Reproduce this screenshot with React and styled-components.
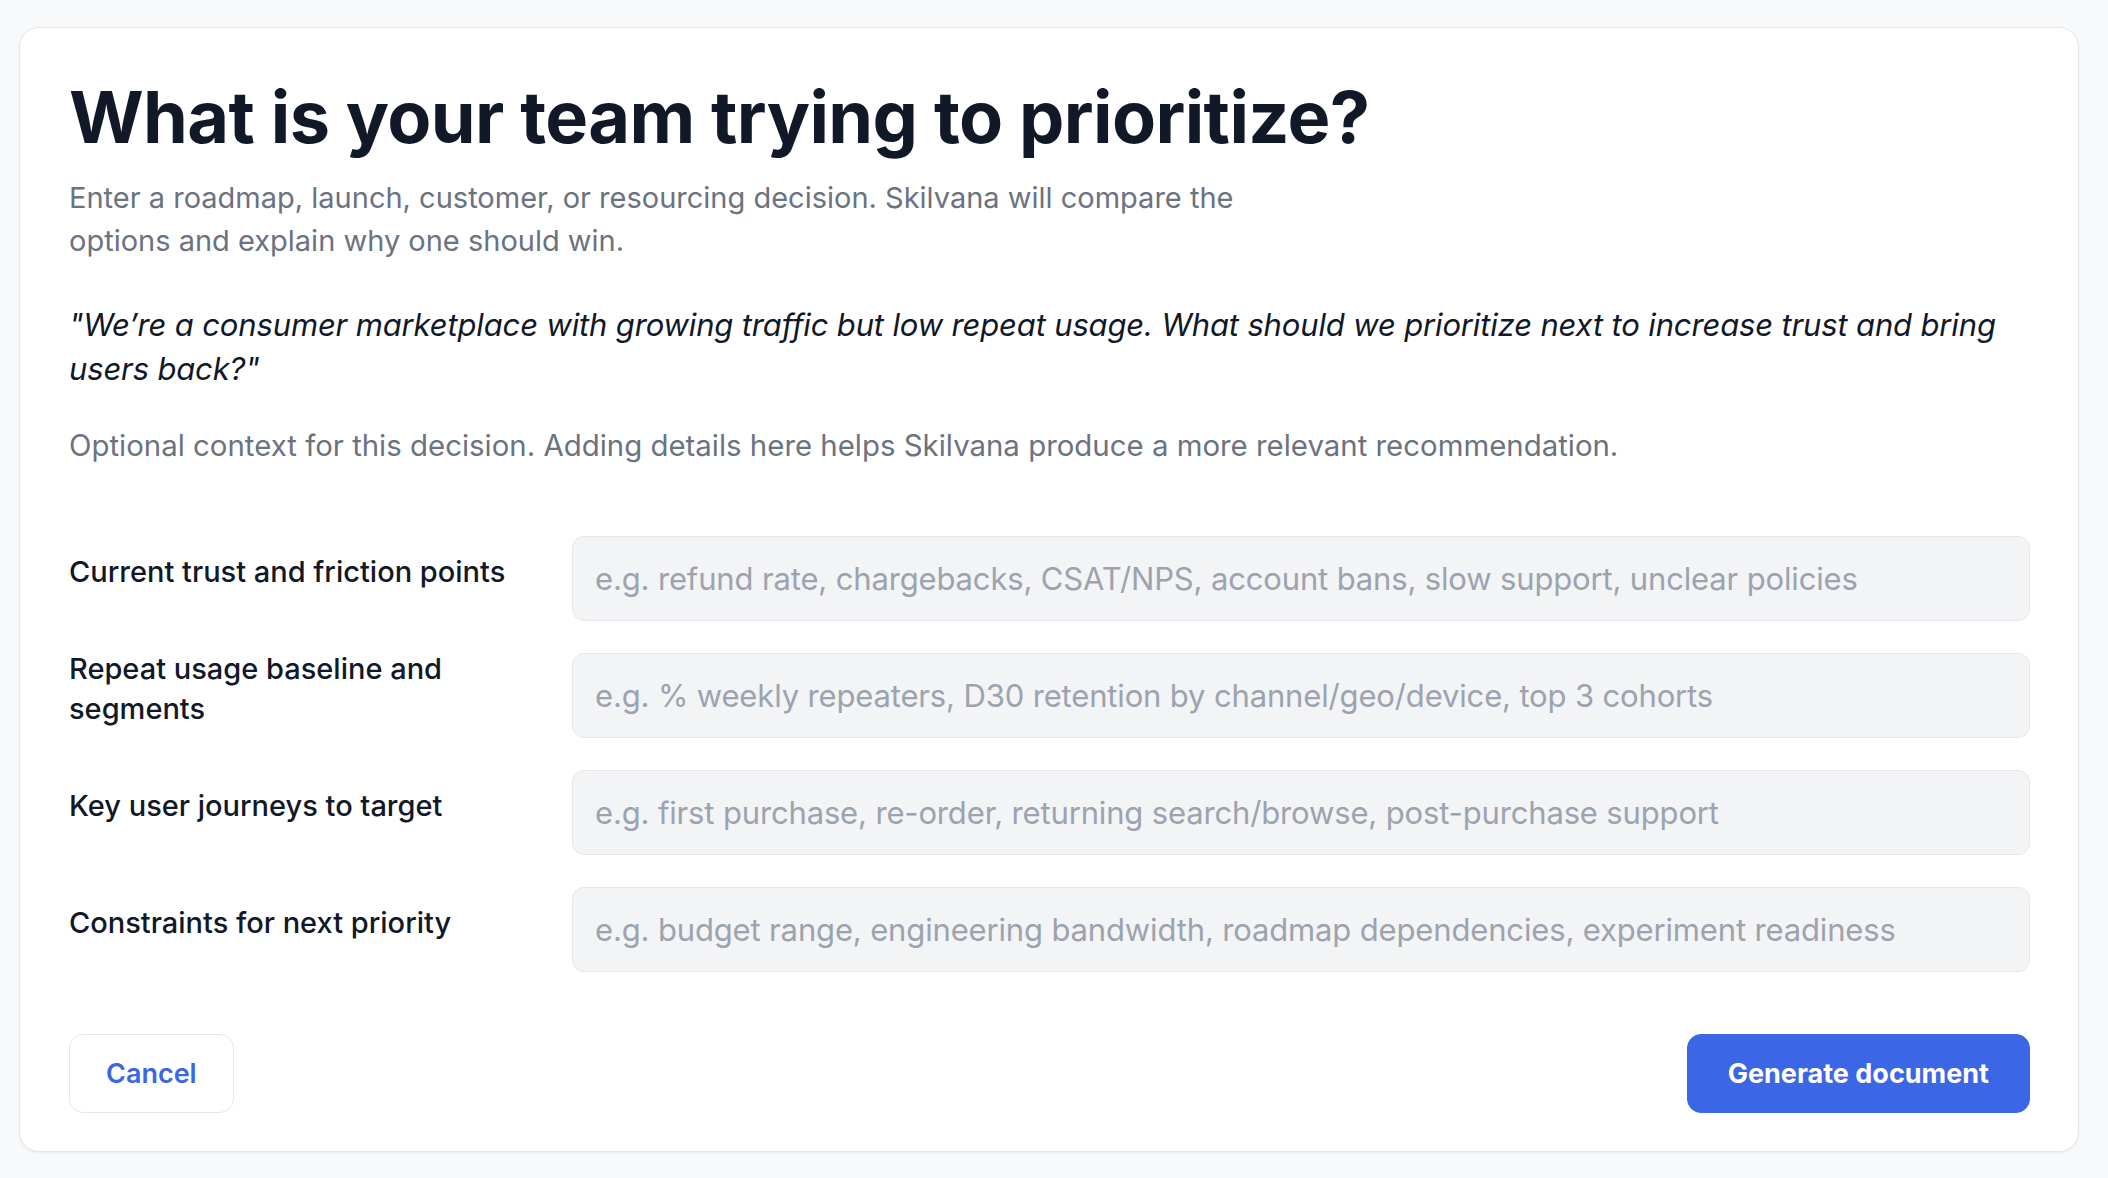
import React from "react";
import styled, { createGlobalStyle } from "styled-components";

const GlobalStyle = createGlobalStyle`
	* {
		box-sizing: border-box;
	}
	body {
		margin: 0;
		background: #f8f9fb;
		font-family: Inter, "Noto Sans", sans-serif;
		color: #111827;
	}
`;

const Page = styled.div`
	padding: 27px 29px 26px 19px;
`;

const Card = styled.section`
	background: #ffffff;
	border: 1px solid #e5e7eb;
	border-radius: 20px;
	box-shadow: 0 1px 3px rgba(17, 24, 39, 0.06);
	padding: 48px 48px 38px 49px;
`;

const Title = styled.h1`
	margin: 0 0 19px;
	font-size: 72px;
	line-height: 81px;
	font-weight: 700;
	letter-spacing: -0.6px;
	color: #111827;
`;

const Lead = styled.p`
	margin: 0;
	max-width: 1220px;
	font-size: ${p => p.$size || "29px"};
	line-height: 43px;
	color: #6b7280;
`;

const Quote = styled.p`
	margin: 41px 0 0;
	font-size: 31px;
	line-height: 44px;
	font-style: italic;
	color: #111827;
	letter-spacing: -0.15px;
`;

const Hint = styled(Lead)`
	max-width: none;
	margin-top: 33px;
`;

const Fields = styled.div`
	display: flex;
	flex-direction: column;
	gap: 32px;
	margin-top: 69px;
`;

const Row = styled.label`
	display: grid;
	grid-template-columns: 471px 1fr;
	column-gap: 32px;
	align-items: center;
`;

const FieldName = styled.span`
	margin: -7px 0 7px;
	font-size: 29px;
	line-height: 40px;
	font-weight: 500;
	color: #111827;
`;

const Input = styled.input`
	height: 85px;
	width: 100%;
	padding: 0 22px;
	border: 1px solid #e5e7eb;
	border-radius: 12px;
	background: #f3f4f6;
	font-family: inherit;
	font-size: 31px;
	color: #111827;
	letter-spacing: -0.15px;
	outline: none;

	&::placeholder {
		color: #9ca3af;
	}
`;

const Actions = styled.div`
	display: flex;
	justify-content: space-between;
	margin-top: 62px;
`;

const Button = styled.button`
	height: 79px;
	padding: 0 ${p => (p.$primary ? "40px" : "36px")};
	border-radius: 14px;
	border: 1px solid ${p => (p.$primary ? "#3b66e5" : "#e5e7eb")};
	background: ${p => (p.$primary ? "#3b66e5" : "#ffffff")};
	color: ${p => (p.$primary ? "#ffffff" : "#3b66e5")};
	font-family: inherit;
	font-size: 27px;
	font-weight: ${p => (p.$primary ? 700 : 600)};
	cursor: pointer;
`;

const fields = [
	{
		label: "Current trust and friction points",
		placeholder:
			"e.g. refund rate, chargebacks, CSAT/NPS, account bans, slow support, unclear policies",
	},
	{
		label: "Repeat usage baseline and segments",
		placeholder:
			"e.g. % weekly repeaters, D30 retention by channel/geo/device, top 3 cohorts",
	},
	{
		label: "Key user journeys to target",
		placeholder:
			"e.g. first purchase, re-order, returning search/browse, post-purchase support",
	},
	{
		label: "Constraints for next priority",
		placeholder:
			"e.g. budget range, engineering bandwidth, roadmap dependencies, experiment readiness",
	},
];

const App = () => {
	return (
		<>
			<GlobalStyle />
			<Page>
				<Card>
					<Title>What is your team trying to prioritize?</Title>
					<Lead>
						Enter a roadmap, launch, customer, or resourcing decision. Skilvana will
						compare the options and explain why one should win.
					</Lead>
					<Quote>
						"We’re a consumer marketplace with growing traffic but low repeat usage.
						What should we prioritize next to increase trust and bring users back?"
					</Quote>
					<Hint $size="29.4px">
						Optional context for this decision. Adding details here helps Skilvana
						produce a more relevant recommendation.
					</Hint>

					<Fields>
						{fields.map(field => (
							<Row key={field.label}>
								<FieldName>{field.label}</FieldName>
								<Input type="text" placeholder={field.placeholder} />
							</Row>
						))}
					</Fields>

					<Actions>
						<Button type="button">Cancel</Button>
						<Button type="button" $primary>
							Generate document
						</Button>
					</Actions>
				</Card>
			</Page>
		</>
	);
};

export default App;
